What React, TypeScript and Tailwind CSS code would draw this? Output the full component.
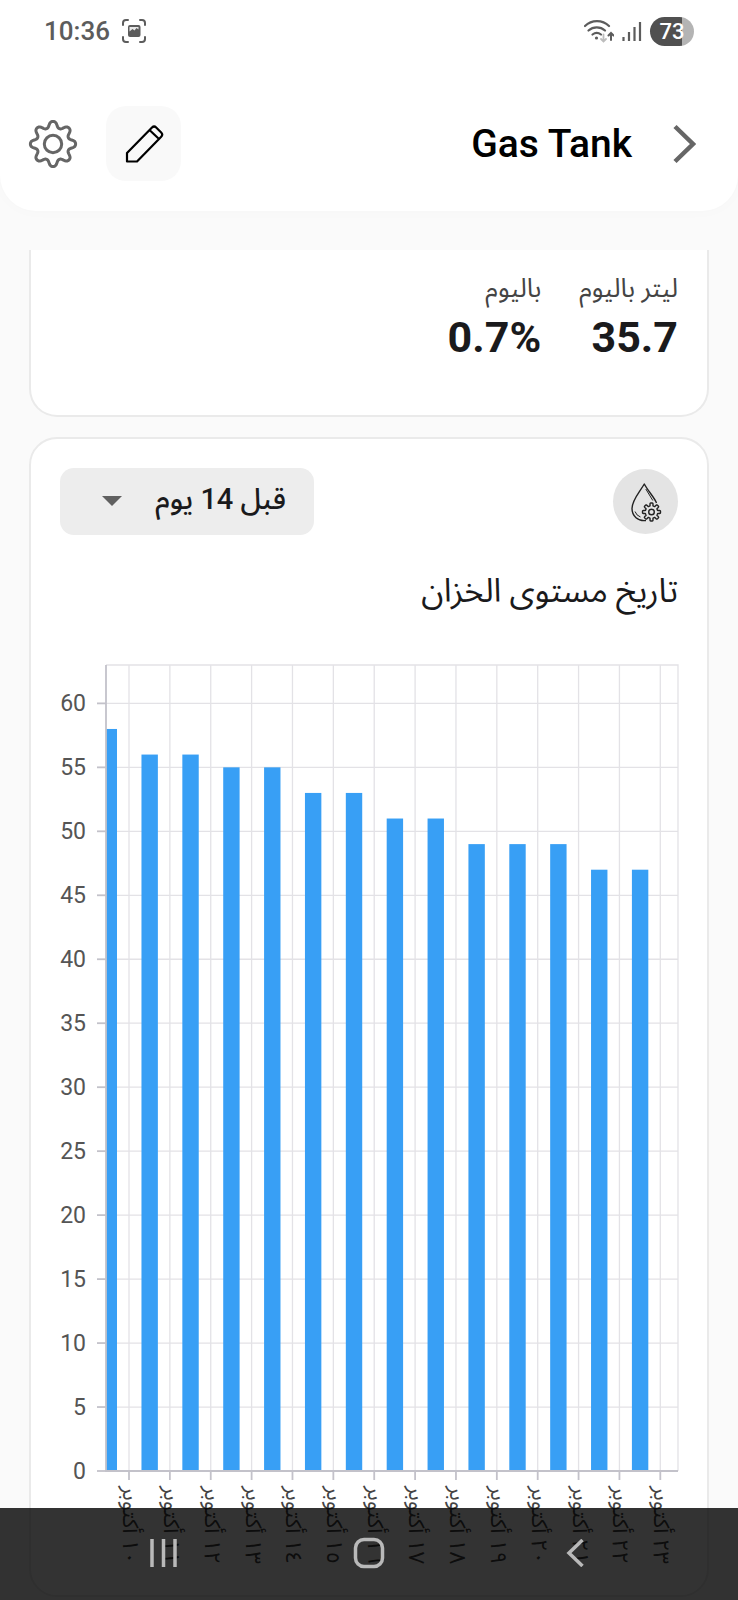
import React, { useState } from "react";

type DayLevel = { day: string; level: number };

const LEVELS: DayLevel[] = [
  { day: "١٠ أكتوبر", level: 58 },
  { day: "١١ أكتوبر", level: 56 },
  { day: "١٢ أكتوبر", level: 56 },
  { day: "١٣ أكتوبر", level: 55 },
  { day: "١٤ أكتوبر", level: 55 },
  { day: "١٥ أكتوبر", level: 53 },
  { day: "١٦ أكتوبر", level: 53 },
  { day: "١٧ أكتوبر", level: 51 },
  { day: "١٨ أكتوبر", level: 51 },
  { day: "١٩ أكتوبر", level: 49 },
  { day: "٢٠ أكتوبر", level: 49 },
  { day: "٢١ أكتوبر", level: 49 },
  { day: "٢٢ أكتوبر", level: 47 },
  { day: "٢٣ أكتوبر", level: 47 },
];

const Y_TICKS = [0, 5, 10, 15, 20, 25, 30, 35, 40, 45, 50, 55, 60];

/* Plot area inside the chart's own coordinate system */
const PLOT = { left: 46, right: 618, top: 5, bottom: 811 };
const MAX_LEVEL = 63;
const STEP = 40.87;
const BAR_WIDTH = 16.4;

// Closed gear outline, a higher sharpness gives squarer teeth
const gearPath = (cx: number, cy: number, radius: number, depth: number, sharpness: number) => {
  const points: string[] = [];
  for (let i = 0; i < 240; i++) {
    const angle = (i / 240) * Math.PI * 2;
    const wave = Math.tanh(sharpness * Math.cos(8 * angle)) / Math.tanh(sharpness);
    const r = radius + depth * wave;
    points.push(`${(cx + r * Math.cos(angle)).toFixed(2)} ${(cy + r * Math.sin(angle)).toFixed(2)}`);
  }
  return `M${points.join("L")}Z`;
};

const StatusBar: React.FC = () => (
  <div className="flex h-15 items-center justify-between px-11 pt-0.5 text-[#5c5c5c]">
    <div className="flex items-center gap-3">
      <span className="text-[26px] font-medium leading-8">10:36</span>
      <svg className="size-6" viewBox="0 0 24 24" fill="none" stroke="currentColor" strokeWidth="2" strokeLinecap="round">
        <path d="M1 6V4a3 3 0 0 1 3-3h2M18 1h2a3 3 0 0 1 3 3v2M23 18v2a3 3 0 0 1-3 3h-2M6 23H4a3 3 0 0 1-3-3v-2" />
        <rect x="6" y="6" width="12.500" height="12" rx="2" fill="currentColor" stroke="none" />
        <path d="M7.500 12.500 10.500 10l2 1.500 2-2.500 2 1.500V8h-9Z" fill="#e8e8e8" stroke="none" />
      </svg>
    </div>
    <div className="flex items-center gap-2">
      <svg className="h-6 w-[30px]" viewBox="0 0 30 24" fill="none" stroke="currentColor" strokeWidth="2.200" strokeLinecap="round">
        <path d="M1 7a17 17 0 0 1 24 0M4.500 11.500a12.500 12.500 0 0 1 16.500 0M8.500 15.500a7 7 0 0 1 8.500 0" />
        <circle cx="12.500" cy="19" r="1.600" fill="currentColor" stroke="none" />
        <path d="M19.500 15.500v6.500M17 20l2.500 2.500 2.500-2.500" stroke="#bdbdbd" strokeWidth="1.800" />
        <path d="M27 21v-7M24.500 16.500l2.500-2.500 2.500 2.500" strokeWidth="2" />
      </svg>
      <svg className="h-6 w-5" viewBox="0 0 20 24" fill="none" stroke="currentColor" strokeWidth="2.200">
        <path d="M1.500 18v4M7 13v9M12.500 8v14M18 3v19" />
      </svg>
      <div className="flex h-[29px] w-11 items-center justify-center rounded-full bg-linear-to-r from-[#505050] from-72% to-[#b4b4b4] to-72% pt-0.5 text-[22px] font-medium leading-none text-white">
        73
      </div>
    </div>
  </div>
);

const Header: React.FC = () => (
  <header className="rounded-b-[36px] bg-white pb-[30px] shadow-[0_0_16px_rgba(0,0,0,0.02)]">
    <StatusBar />
    <div className="mt-[46px] flex items-center justify-between pl-7 pr-[42px]">
      <div className="flex items-center gap-7">
        <button aria-label="الإعدادات" className="text-[#666]">
          <svg className="size-[50px]" viewBox="0 0 50 50" fill="none" stroke="currentColor" strokeWidth="3" strokeLinejoin="round">
            <path d={gearPath(25, 25, 19.6, 3, 1.1)} />
            <circle cx="25" cy="25" r="8.700" />
          </svg>
        </button>
        <button
          aria-label="تعديل"
          className="flex size-[75px] items-center justify-center rounded-[20px] bg-[#f9f9f9] text-black"
        >
          <svg className="size-10" viewBox="0 0 40 40" fill="none" stroke="currentColor" strokeWidth="2.200" strokeLinejoin="round">
            <path d="M3 37.500v-8.500L28 3.500a3 3 0 0 1 4.200 0l5 5a3 3 0 0 1 0 4.200L13 37.500ZM25.500 6l9 8.500" />
          </svg>
        </button>
      </div>
      <div className="flex items-center gap-10">
        <h1 className="pt-0.5 text-[39px] font-medium leading-none text-black">Gas Tank</h1>
        <button aria-label="رجوع" className="text-[#666]">
          <svg className="h-10 w-6" viewBox="0 0 24 40" fill="none" stroke="currentColor" strokeWidth="4.500">
            <path d="M3 2.500 21 20 3 37.500" />
          </svg>
        </button>
      </div>
    </div>
  </header>
);

const UsageStat: React.FC<{ label: string; value: string }> = ({ label, value }) => (
  <div>
    <div className="text-[26px] leading-9 text-[#444]">{label}</div>
    <div dir="ltr" className="text-right text-[43px] font-bold leading-[62px] text-[#1a1a1c]">
      {value}
    </div>
  </div>
);

const LevelChart: React.FC = () => {
  const yOf = (value: number) => PLOT.bottom - (value / MAX_LEVEL) * (PLOT.bottom - PLOT.top);

  return (
    <svg className="block w-full overflow-visible [direction:ltr]" viewBox="0 0 618 915">
      <clipPath id="plot">
        <rect x={PLOT.left} y={PLOT.top} width={PLOT.right - PLOT.left} height={PLOT.bottom - PLOT.top} />
      </clipPath>

      {/* Grid */}
      <g stroke="#e3e2e6" strokeWidth="1.300">
        {Y_TICKS.map((tick) => (
          <line key={tick} x1={PLOT.left} x2={PLOT.right} y1={yOf(tick)} y2={yOf(tick)} />
        ))}
        {LEVELS.map(({ day }, i) => (
          <line key={day} x1={69 + STEP * i} x2={69 + STEP * i} y1={PLOT.top} y2={PLOT.bottom} />
        ))}
        <path d={`M${PLOT.left} ${PLOT.top}H${PLOT.right}V${PLOT.bottom}`} fill="none" />
      </g>

      {/* Bars */}
      <g fill="#389ff5" clipPath="url(#plot)">
        {LEVELS.map(({ day, level }, i) => (
          <rect
            key={day}
            x={48.8 + STEP * i - BAR_WIDTH / 2}
            y={yOf(level)}
            width={BAR_WIDTH}
            height={PLOT.bottom - yOf(level)}
          />
        ))}
      </g>

      {/* Axes and tick marks */}
      <g stroke="#c3c2ca" strokeWidth="1.800" fill="none">
        <path d={`M${PLOT.left} ${PLOT.top}V${PLOT.bottom}H${PLOT.right}`} />
        {Y_TICKS.map((tick) => (
          <line key={tick} x1={PLOT.left - 9} x2={PLOT.left} y1={yOf(tick)} y2={yOf(tick)} />
        ))}
        {LEVELS.map(({ day }, i) => (
          <line key={day} x1={69 + STEP * i} x2={69 + STEP * i} y1={PLOT.bottom} y2={PLOT.bottom + 9} />
        ))}
      </g>

      <g className="fill-[#555] text-[23px]" textAnchor="end">
        {Y_TICKS.map((tick) => (
          <text key={tick} x="26" y={yOf(tick) + 8}>
            {tick}
          </text>
        ))}
      </g>

      {/* Day labels read downwards, starting under the axis */}
      <g className="fill-[#444] text-[22px] [direction:rtl]" textAnchor="end">
        {LEVELS.map(({ day }, i) => (
          <text key={day} transform={`translate(${63 + STEP * i} 826) rotate(90)`}>
            {day}
          </text>
        ))}
      </g>
    </svg>
  );
};

const HistoryCard: React.FC = () => {
  const [range, setRange] = useState<string>("14");

  return (
    <section className="mt-5 rounded-[28px] border-2 border-[#eaeaea] bg-white px-[29px] pb-5 pt-[29px]">
      <div className="flex items-center justify-between">
        <div className="flex size-[65px] items-center justify-center rounded-full bg-[#e4e4e4] text-[#222]">
          <svg className="h-10 w-8" viewBox="0 0 32 40" fill="none" stroke="currentColor" strokeWidth="1.400" strokeLinejoin="round">
            <path d="M16 38.500C8 39.500 2 34 2 26.500 2 18 9 11 14.300 2 18 9 24.500 15.500 26.500 21" />
            <path d="M15.800 7l7 11.500M5 29.500a9 9 0 0 0 5.500 5.500" strokeWidth="1" />
            <path d={gearPath(21.5, 30, 7.6, 1.4, 4)} fill="#e4e4e4" />
            <circle cx="21.500" cy="30" r="2.800" />
          </svg>
        </div>
        <div className="relative">
          <select
            aria-label="الفترة"
            value={range}
            onChange={(e) => setRange(e.target.value)}
            className="block h-[67px] w-[254px] appearance-none rounded-[14px] bg-[#ededed] pb-1 pr-7 text-[29px] font-medium text-[#1a1a1c]"
          >
            <option value="7">قبل 7 يوم</option>
            <option value="14">قبل 14 يوم</option>
            <option value="30">قبل 30 يوم</option>
          </select>
          <svg className="pointer-events-none absolute left-[42px] top-7 h-[10px] w-5" viewBox="0 0 20 10" fill="#606060">
            <path d="M0 0h20L10 10Z" />
          </svg>
        </div>
      </div>

      <h2 className="mb-[45px] mt-8 text-[33px] leading-[48px] text-[#1a1a1c]">تاريخ مستوى الخزان</h2>

      <LevelChart />
    </section>
  );
};

const NavigationBar: React.FC = () => (
  <nav className="fixed inset-x-0 bottom-0 grid h-23 grid-cols-3 place-items-center bg-black/80 px-[60px] pb-0.5 text-[#b9b9b9]">
    <button aria-label="Recents">
      <svg className="h-7 w-[27px]" viewBox="0 0 27 28" stroke="currentColor" strokeWidth="3.500">
        <path d="M2 0v28M13.500 0v28M25 0v28" />
      </svg>
    </button>
    <button aria-label="Home">
      <svg className="size-8" viewBox="0 0 32 32" fill="none" stroke="currentColor" strokeWidth="3.500">
        <rect x="2.500" y="2.500" width="27" height="27" rx="8.500" />
      </svg>
    </button>
    <button aria-label="Back">
      <svg className="h-7 w-[18px]" viewBox="0 0 18 28" fill="none" stroke="currentColor" strokeWidth="3.500">
        <path d="M16.500 1 3 14l13.500 13" />
      </svg>
    </button>
  </nav>
);

const App: React.FC = () => {
  return (
    <div className="min-h-screen bg-[#fafafa] font-[Roboto,'Noto_Sans_Arabic','Noto_Sans','DejaVu_Sans',sans-serif]">
      <Header />
      <main dir="rtl" className="px-[29px] pt-[39px]">
        <section className="flex gap-[38px] rounded-b-[28px] border-2 border-t-0 border-[#eaeaea] bg-white px-[29px] pb-[47px] pt-5">
          <UsageStat label="ليتر باليوم" value="35.7" />
          <UsageStat label="باليوم" value="0.7%" />
        </section>
        <HistoryCard />
      </main>
      <NavigationBar />
    </div>
  );
};

export default App;
